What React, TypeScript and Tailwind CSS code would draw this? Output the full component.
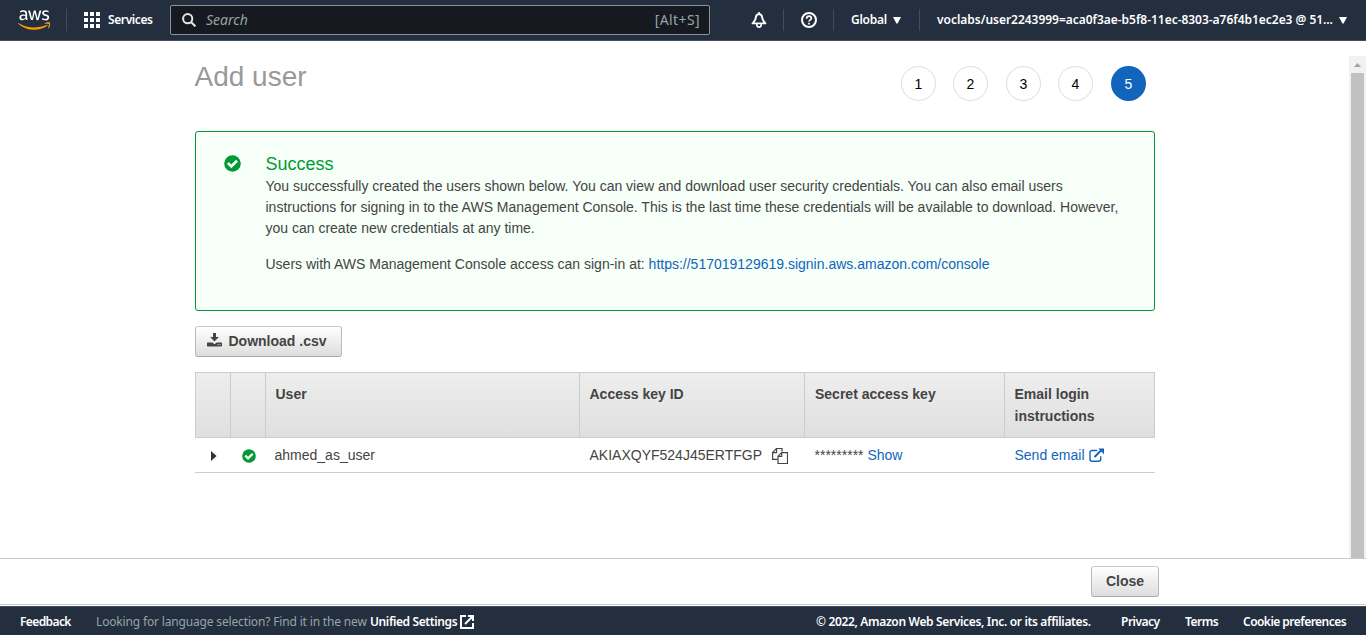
import type { ReactNode } from "react";
import { FaAws } from "react-icons/fa";

const EMBER = "font-['Noto_Sans','Open_Sans',sans-serif]";

function Divider({ className = "" }: { className?: string }) {
  return <div className={`h-[22px] w-px shrink-0 bg-[#414d5c] ${className}`} />;
}

function Caret({ className = "" }: { className?: string }) {
  return (
    <svg className={`h-[7px] w-[8px] shrink-0 ${className}`} viewBox="0 0 8 7" fill="currentColor">
      <path d="M0 0h8L4.6 6.4h-1.2z" />
    </svg>
  );
}

function CheckBadge({ className }: { className: string }) {
  return (
    <svg className={className} viewBox="0 0 17 17">
      <circle cx="8.5" cy="8.5" r="8.3" fill="#009933" />
      <path d="M3.9 8.1l3.4 3.3 5.7-5.7" fill="none" stroke="#fff" strokeWidth="2.8" />
    </svg>
  );
}

function Logo() {
  return (
    <div className="ml-[18px] flex h-[24px] w-[32px] items-center">
      <svg className="h-0 w-0">
        <linearGradient id="logo-fill" gradientUnits="userSpaceOnUse" x1="0" y1="0" x2="0" y2="512">
          <stop offset="0.6" stopColor="#fff" />
          <stop offset="0.6" stopColor="#ff9900" />
        </linearGradient>
      </svg>
      <FaAws className="-ml-[0.5px] h-[26px] w-[32.5px] shrink-0" fill="url(#logo-fill)" />
    </div>
  );
}

function Header() {
  return (
    <header className={`flex h-[41px] shrink-0 items-center border-b border-[#414d5c] bg-[#232f3e] text-[12px] font-semibold text-white ${EMBER}`}>
      <Logo />
      <Divider className="ml-[16px]" />
      <svg className="ml-[17px] size-4" viewBox="0 0 16 16" fill="#fff">
        <path d="M0 0h4v4H0zM6 0h4v4H6zM12 0h4v4h-4zM0 6h4v4H0zM6 6h4v4H6zM12 6h4v4h-4zM0 12h4v4H0zM6 12h4v4H6zM12 12h4v4h-4z" />
      </svg>
      <span className="ml-2 w-[46px] tracking-[-0.4px]">Services</span>
      <div className="ml-[16px] flex h-[30px] w-[540px] shrink-0 items-center rounded-[2px] border border-[#879596] bg-[#16191f] px-[11px] text-[14px] font-normal text-[#95a5a6]">
        <svg className="size-[14px]" viewBox="0 0 14 14" fill="none" stroke="#e3e6e6" strokeWidth="2">
          <circle cx="5.7" cy="5.7" r="4.6" />
          <path d="M9 9l4.4 4.4" />
        </svg>
        <span className="-mt-px ml-[10px] tracking-[0px] italic">Search</span>
        <span className="-mt-px -mr-[2px] ml-auto tracking-[0.4px]">[Alt+S]</span>
      </div>
      <svg className="ml-[41px] size-4 shrink-0" viewBox="0 0 16 16" fill="none" stroke="#fff">
        <path d="M8 2C6 2.300 4.900 3.600 4.800 5.600 4.700 8 3.800 8.600 1.600 11.400h12.800C12.200 8.600 11.300 8 11.200 5.600 11.100 3.600 10 2.300 8 2z" strokeWidth="1.9" strokeLinejoin="round" />
        <path d="M8 0v2" strokeWidth="1.6" />
        <path d="M5.800 12v.900c.200 3 4.200 3 4.400 0V12" strokeWidth="1.6" />
      </svg>
      <Divider className="ml-[16px]" />
      <svg className="ml-[17px] size-4 shrink-0" viewBox="0 0 16 16" fill="none" stroke="#fff" strokeWidth="2">
        <circle cx="8" cy="8" r="7" />
        <path d="M5.6 6.7C5.6 3.4 10.5 3.5 10.4 6.3c0 1.6-2.4 1.500-2.4 3.300M8 10.700v1.800" strokeWidth="1.7" />
      </svg>
      <Divider className="ml-[16px]" />
      <span className="ml-[17px] w-[36px] tracking-[-0.25px]">Global</span>
      <Caret className="ml-[6px]" />
      <Divider className="ml-[18px]" />
      <span className="ml-[17px] w-[396px] whitespace-nowrap tracking-[-0.03px]">
        voclabs/user2243999=aca0f3ae-b5f8-11ec-8303-a76f4b1ec2e3 @ 51...
      </span>
      <Caret className="ml-[6px]" />
    </header>
  );
}

function Steps() {
  return (
    <div className="mt-[25px] mr-[9px] flex text-[14px] text-black">
      {[1, 2, 3, 4].map((n) => (
        <div
          key={n}
          className="mr-[17px] flex size-[35px] items-center justify-center rounded-full border border-[#ddd] pt-[2px] even:mr-[18px]"
        >
          {n}
        </div>
      ))}
      <div className="flex size-[35px] items-center justify-center rounded-full bg-[#1166bb] pt-[2px] text-white">5</div>
    </div>
  );
}

function Button({ children, className }: { children: ReactNode; className: string }) {
  return (
    <button
      className={`flex h-[31px] items-center justify-center rounded-[3px] border border-[#bbb] border-t-[#ccc] border-b-[#aaa] bg-linear-to-b from-white to-[#ddd] text-[14px] font-bold text-[#444] ${className}`}
    >
      {children}
    </button>
  );
}

function Alert() {
  return (
    <section className="mt-[30px] flex h-[180px] rounded-[3px] border border-[#009933] bg-[#f7fff9] pl-[27.5px]">
      <CheckBadge className="mt-[22.5px] size-[17px] shrink-0" />
      <div className="ml-[25px] pt-[22px] leading-[21px]">
        <h2 className="mb-px text-[18px] leading-[21px] text-[#009933]">Success</h2>
        <p className="w-[860px]">
          You successfully created the users shown below. You can view and download user security credentials. You can also email users
          <br />
          instructions for signing in to the AWS Management Console. This is the last time these credentials will be available to download. However,
          <br />
          you can create new credentials at any time.
        </p>
        <p className="mt-[15px]">
          Users with AWS Management Console access can sign-in at:{" "}
          <a className="text-[#1166bb]">https://517019129619.signin.aws.amazon.com/console</a>
        </p>
      </div>
    </section>
  );
}

const COLUMNS = "grid grid-cols-[35px_35px_314px_225px_200px_150px]";

function UsersTable() {
  return (
    <div className="mt-[15px]">
      <div className={`${COLUMNS} h-[66px] border border-[#ccc] bg-linear-to-b from-[#eee] to-[#dfdfdf] leading-[22px] font-bold`}>
        <div className="border-r border-[#ccc]" />
        <div className="border-r border-[#ccc]" />
        <div className="border-r border-[#ccc] px-[9.5px] pt-[10px]">User</div>
        <div className="border-r border-[#ccc] px-[9.5px] pt-[10px]">Access key ID</div>
        <div className="border-r border-[#ccc] px-[10px] pt-[10px]">Secret access key</div>
        <div className="px-[9.5px] pt-[10px]">
          Email login
          <br />
          instructions
        </div>
      </div>
      <div className={`${COLUMNS} h-[35px] items-center border-b border-[#ccc]`}>
        <svg className="mt-[2px] ml-[16px] h-[10px] w-[6px]" viewBox="0 0 6 10" fill="#333">
          <path d="M0 0l5.6 5L0 10z" />
        </svg>
        <CheckBadge className="mt-px ml-[12px] size-[14px]" />
        <div className="pl-[9.5px]">ahmed_as_user</div>
        <div className="flex items-center pl-[10.5px]">
          AKIAXQYF524J45ERTFGP
          <svg className="mt-[2px] ml-[10px] size-4" viewBox="0 0 16 16" fill="none" stroke="#444" strokeWidth="1.2">
            <path d="M10 3.5v-3H4.5L.6 4.400v7h5M.6 4.700h4V.6" />
            <path d="M9.600 4.600h5.900v10.900H6V8.200zM6 8.300h3.700V4.600" />
          </svg>
        </div>
        <div className="pl-[10.5px]">
          ********* <a className="text-[#1166bb]">Show</a>
        </div>
        <a className="flex items-center pl-[10.5px] text-[#1166bb]">
          Send email
          <svg className="ml-[4.5px] size-[15px]" viewBox="0 0 15 15" fill="none" stroke="#1166bb" strokeWidth="1.4">
            <path d="M8.200 2.500H3A2 2 0 0 0 1 4.500v6.700a2 2 0 0 0 2 2h6.700a2 2 0 0 0 2-2V8.300" />
            <path d="M5.500 9l6.500-6.500" strokeWidth="2" />
            <path d="M9.300.500H15v5.700z" fill="#1166bb" stroke="none" />
          </svg>
        </a>
      </div>
    </div>
  );
}

function Scrollbar() {
  return (
    <div className="mt-[15px] flex w-[17px] shrink-0 flex-col items-center bg-[#f1f1f1]">
      <svg className="mt-[7px] h-[4px] w-[7px]" viewBox="0 0 7 4" fill="#a3a3a3">
        <path d="M3.500 0L7 4H0z" />
      </svg>
      <div className="mt-[6px] w-[13px] grow bg-[#c1c1c1]" />
    </div>
  );
}

function Footer() {
  return (
    <footer className={`flex h-[29px] shrink-0 items-center border-t border-[#414d5c] bg-[#232f3e] pt-px pr-[20px] pl-[20px] text-[12px] font-semibold whitespace-nowrap text-white ${EMBER}`}>
      <span className="w-[51px] tracking-[-0.6px]">Feedback</span>
      <span className="ml-[25px] w-[271px] font-normal tracking-[-0.16px] text-[#95a5a6]">
        Looking for language selection? Find it in the new
      </span>
      <span className="ml-[3px] w-[87px] tracking-[-0.38px]">Unified Settings</span>
      <svg className="ml-[3px] size-[14px]" viewBox="0 0 14 14" fill="none" stroke="#fff" strokeWidth="2">
        <path d="M6 1H1v12h12V8M8 1h5v5M13 1L5 9" />
      </svg>
      <span className="ml-auto w-[275px] tracking-[-0.34px]">© 2022, Amazon Web Services, Inc. or its affiliates.</span>
      <span className="ml-[30px] w-[39px] tracking-[-0.5px]">Privacy</span>
      <span className="ml-[25px] w-[33px] tracking-[-0.5px]">Terms</span>
      <span className="ml-[25px] w-[103px] tracking-[-0.53px]">Cookie preferences</span>
    </footer>
  );
}

export default function App() {
  return (
    <div className="flex h-[635px] w-[1366px] flex-col overflow-hidden bg-white font-['Liberation_Sans',Arial,sans-serif] text-[14px] text-[#444]">
      <Header />
      <div className="flex h-[517px] shrink-0">
        <main className="flex grow flex-col pl-[195px]">
          <div className="w-[960px]">
            <div className="flex justify-between">
              <h1 className="mt-[20px] -ml-[0.5px] text-[28px] leading-[32px] text-[#999]">Add user</h1>
              <Steps />
            </div>
            <Alert />
            <Button className="mt-[15px] w-[147px] pr-[3px]">
              <svg className="mt-[-4px] mr-[6px] h-[14px] w-[15px]" viewBox="0 0 15 14" fill="#444">
                <path d="M6 0h3v4h2.900L7.500 8.600 3.100 4H6z" />
                <path fillRule="evenodd" d="M.700 9.500h4.600L7.500 11.300 9.700 9.500h4.600q.700 0 .700.700v2.600q0 .700-.700.700H.700q-.700 0-.700-.700v-2.600q0-.700.700-.700zM10.500 11.300v1h1v-1zm2 0v1h1v-1z" />
              </svg>
              Download .csv
            </Button>
            <UsersTable />
          </div>
        </main>
        <Scrollbar />
      </div>
      <div className="flex h-[47px] shrink-0 items-start justify-end border-y border-[#ccc] pt-[7px] pr-[207px]">
        <Button className="w-[68px]">Close</Button>
      </div>
      <div className="h-px shrink-0" />
      <Footer />
    </div>
  );
}
